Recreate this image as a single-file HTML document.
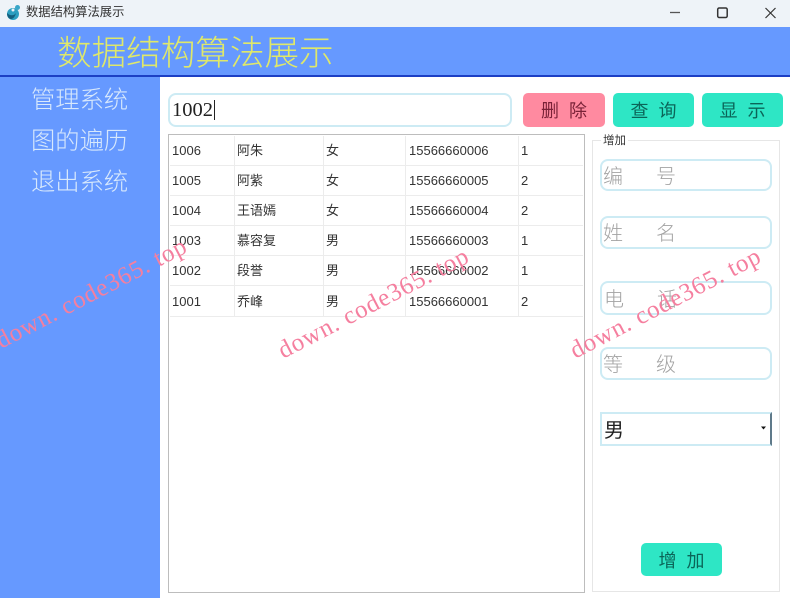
<!DOCTYPE html>
<html lang="zh">
<head>
<meta charset="utf-8">
<style>
html,body{margin:0;padding:0;background:#fff}
body{width:790px;height:598px;overflow:hidden;position:relative;font-family:"Liberation Sans","Noto Sans CJK SC",sans-serif;filter:blur(.3px)}
.a{position:absolute;white-space:pre}
.box{position:absolute;box-sizing:border-box;background:#fff;border:2px solid #cdebf4;border-radius:8px}
.ph{position:absolute;color:#a3a3a3;font-size:20px;line-height:28px;letter-spacing:33px;font-family:"Noto Sans CJK SC",sans-serif;font-weight:300;white-space:pre}
.btn{position:absolute;box-sizing:border-box;height:34px;border-radius:5px;background:#2ee6c5;color:#0b6558;font-size:18px;line-height:34px;letter-spacing:10px;padding-left:10px;text-align:center;font-family:"Noto Sans CJK SC",sans-serif;white-space:pre}
.nav{position:absolute;left:31px;color:#d7e8fc;font-size:24.300px;line-height:32px;font-family:"Noto Sans CJK SC",sans-serif;font-weight:300;white-space:pre}
.hl{position:absolute;left:170px;width:413px;height:1px;background:#ececec}
.vl{position:absolute;top:136px;width:1px;height:180px;background:#ececec}
.c{position:absolute;font-size:13px;line-height:18px;color:#333;white-space:pre;font-family:"Liberation Sans","Noto Sans CJK SC",sans-serif}
.wm{position:absolute;font-family:"Liberation Serif","DejaVu Serif",serif;font-size:25px;line-height:30px;letter-spacing:.8px;color:#f57f9f;white-space:pre;transform-origin:0 100%;transform:rotate(-27.500deg)}
</style>
</head>
<body>
<div class="a" style="left:0;top:0;width:790px;height:27px;background:#eef3f8"></div>
<svg class="a" style="left:5px;top:4px" width="17" height="17" viewBox="0 0 17 17">
<circle cx="8" cy="10" r="6" fill="#2c9fc0"/>
<path d="M2 9c3 3 7 3 9 0-1 4-3 6-5 6-2 0-4-2-4-6z" fill="#14607e"/>
<circle cx="12.500" cy="3.500" r="2.500" fill="#3aa6c8"/>
<circle cx="8" cy="6" r="1.500" fill="#eef3f8"/>
</svg>
<div class="a" style="left:26px;top:2px;font-size:12.300px;line-height:19px;color:#333;font-family:'Noto Sans CJK SC',sans-serif">数据结构算法展示</div>
<svg class="a" style="left:660px;top:5px" width="125" height="16" viewBox="0 0 125 16">
<path d="M10 7.500h10" stroke="#555" stroke-width="1.300" fill="none"/>
<rect x="57.700" y="3" width="9.500" height="9.500" rx="1.500" stroke="#333" stroke-width="1.500" fill="none"/>
<path d="M105.500 3l10 10M115.500 3l-10 10" stroke="#333" stroke-width="1.200" fill="none"/>
</svg>

<div class="a" style="left:0;top:27px;width:790px;height:49px;background:#6699ff"></div>
<div class="a" style="left:0;top:75px;width:790px;height:2px;background:#1c3fc4"></div>
<div class="a" style="left:57px;top:28px;font-size:34.600px;line-height:44px;color:#dfe86a;font-family:'Noto Sans CJK SC',sans-serif;font-weight:300">数据结构算法展示</div>

<div class="a" style="left:0;top:77px;width:160px;height:521px;background:#6699ff"></div>
<div class="nav" style="top:82px">管理系统</div>
<div class="nav" style="top:123px">图的遍历</div>
<div class="nav" style="top:164px">退出系统</div>

<div class="box" style="left:168px;top:93px;width:344px;height:34px"></div>
<div class="a" style="left:172px;top:97px;font-family:'Liberation Serif',serif;font-size:20.500px;line-height:27px;color:#222">1002</div>
<div class="a" style="left:214px;top:100px;width:1px;height:20px;background:#222"></div>

<div class="btn" style="left:523px;top:93px;width:82px;background:#ff8aa0;color:#7a2238">删除</div>
<div class="btn" style="left:613px;top:93px;width:81px">查询</div>
<div class="btn" style="left:702px;top:93px;width:81px">显示</div>

<div class="a" style="left:168px;top:134px;width:417px;height:459px;box-sizing:border-box;border:1.500px solid #bdbdbd"></div>
<div class="hl" style="top:165px"></div><div class="hl" style="top:195px"></div><div class="hl" style="top:225px"></div><div class="hl" style="top:255px"></div><div class="hl" style="top:285px"></div><div class="hl" style="top:316px"></div>
<div class="vl" style="left:234px"></div><div class="vl" style="left:323px"></div><div class="vl" style="left:405px"></div><div class="vl" style="left:518px"></div>

<div class="c" style="left:172px;top:142px">1006</div><div class="c" style="left:237px;top:142px">阿朱</div><div class="c" style="left:326px;top:142px">女</div><div class="c" style="left:409px;top:142px">15566660006</div><div class="c" style="left:521px;top:142px">1</div>
<div class="c" style="left:172px;top:172px">1005</div><div class="c" style="left:237px;top:172px">阿紫</div><div class="c" style="left:326px;top:172px">女</div><div class="c" style="left:409px;top:172px">15566660005</div><div class="c" style="left:521px;top:172px">2</div>
<div class="c" style="left:172px;top:202px">1004</div><div class="c" style="left:237px;top:202px">王语嫣</div><div class="c" style="left:326px;top:202px">女</div><div class="c" style="left:409px;top:202px">15566660004</div><div class="c" style="left:521px;top:202px">2</div>
<div class="c" style="left:172px;top:232px">1003</div><div class="c" style="left:237px;top:232px">慕容复</div><div class="c" style="left:326px;top:232px">男</div><div class="c" style="left:409px;top:232px">15566660003</div><div class="c" style="left:521px;top:232px">1</div>
<div class="c" style="left:172px;top:262px">1002</div><div class="c" style="left:237px;top:262px">段誉</div><div class="c" style="left:326px;top:262px">男</div><div class="c" style="left:409px;top:262px">15566660002</div><div class="c" style="left:521px;top:262px">1</div>
<div class="c" style="left:172px;top:293px">1001</div><div class="c" style="left:237px;top:293px">乔峰</div><div class="c" style="left:326px;top:293px">男</div><div class="c" style="left:409px;top:293px">15566660001</div><div class="c" style="left:521px;top:293px">2</div>

<div class="a" style="left:592px;top:140px;width:188px;height:452px;box-sizing:border-box;border:1px solid #e6e6e6"></div>
<div class="a" style="left:601px;top:133px;padding:0 2px;background:#fff;font-size:11.500px;line-height:15px;color:#333;font-family:'Noto Sans CJK SC',sans-serif">增加</div>

<div class="box" style="left:600px;top:159px;width:172px;height:32px"></div>
<div class="ph" style="left:603px;top:161px">编号</div>
<div class="box" style="left:600px;top:216px;width:172px;height:33px"></div>
<div class="ph" style="left:603px;top:218px">姓名</div>
<div class="box" style="left:600px;top:281px;width:172px;height:34px"></div>
<div class="ph" style="left:604px;top:284px">电话</div>
<div class="box" style="left:600px;top:347px;width:172px;height:33px"></div>
<div class="ph" style="left:603px;top:349px">等级</div>

<div class="a" style="left:600px;top:412px;width:172px;height:34px;box-sizing:border-box;border:2px solid #cdebf4;border-right:2px solid #5f7a8a"></div>
<div class="a" style="left:604px;top:414px;font-size:20px;line-height:29px;color:#222;font-family:'Noto Sans CJK SC',sans-serif">男</div>
<svg class="a" style="left:760px;top:426px" width="8" height="5" viewBox="0 0 8 5"><path d="M1 0.500h5l-2.500 3z" fill="#111"/></svg>

<div class="btn" style="left:641px;top:543px;width:81px;height:33px">增加</div>

<div class="wm" style="left:5px;top:326px">down. code365. top</div>
<div class="wm" style="left:287px;top:336px">down. code365. top</div>
<div class="wm" style="left:579px;top:336px">down. code365. top</div>
</body>
</html>
